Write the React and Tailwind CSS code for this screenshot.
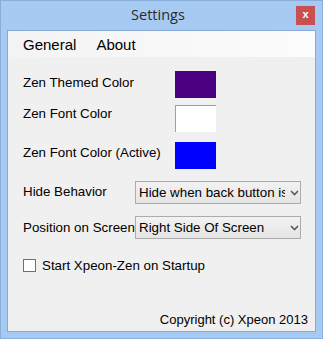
import React from "react";

function Swatch({ color, sunken }) {
  return (
    <div
      className={
        "w-[41px] h-[27px] shrink-0 " +
        (sunken ? "border-t border-l border-[#a0a0a0] " : "")
      }
      style={{ backgroundColor: color }}
    />
  );
}

function Combo({ text }) {
  return (
    <div className="w-[166px] h-[23px] shrink-0 border border-[#acacac] bg-gradient-to-b from-[#f2f2f2] to-[#e5e5e5] flex items-center">
      <div className="w-[146px] ml-[3px] overflow-hidden whitespace-nowrap leading-[15px]">{text}</div>
      <svg width="9" height="6" viewBox="0 0 9 6" className="ml-[5px]">
        <path d="M1 1 L4.5 4.5 L8 1" fill="none" stroke="#5a5a5a" strokeWidth="1.6" />
      </svg>
    </div>
  );
}

export default function App() {
  const body = { fontFamily: '"Liberation Sans", Arial, sans-serif' };
  return (
    <div className="w-[323px] h-[339px] bg-[#a6caf2] border border-[#8aaedc] flex flex-col text-black" style={body}>
      <div className="h-[29px] shrink-0 grid grid-cols-[1fr_auto_1fr] items-center pr-[7px]">
        <div />
        <div className="text-[14.5px] text-[#2a2a2a] leading-none" style={{ fontFamily: '"Open Sans", sans-serif' }}>
          Settings
        </div>
        <div className="justify-self-end w-[19px] h-[19px] bg-[#c75050] flex items-center justify-center">
          <span className="text-white font-bold text-[11px] leading-none -mt-[2px]">x</span>
        </div>
      </div>
      <div className="flex-1 mx-[6px] mb-[6px] border border-[#87a9d6] bg-[#f0f0f0] flex flex-col text-[13.33px]">
        <div className="h-[26px] shrink-0 bg-gradient-to-r from-[#f3f3f3] to-[#fcfcfc] flex items-center pl-[15px] gap-[20px] text-[15px] leading-none">
          <span>General</span>
          <span>About</span>
        </div>
        <div className="flex flex-col pl-[15px] flex-1">
          <div className="mt-[14px] flex items-start h-[27px]">
            <div className="w-[152px] mt-[4px] leading-[15px]">Zen Themed Color</div>
            <Swatch color="#4b0082" />
          </div>
          <div className="mt-[7px] flex items-start h-[27px]">
            <div className="w-[152px] mt-[1px] leading-[15px]">Zen Font Color</div>
            <Swatch color="#ffffff" sunken />
          </div>
          <div className="mt-[10px] flex items-start h-[27px]">
            <div className="w-[152px] mt-[3px] leading-[15px]">Zen Font Color (Active)</div>
            <Swatch color="#0000ff" />
          </div>
          <div className="mt-[12px] flex items-start h-[23px]">
            <div className="w-[112px] mt-[3px] leading-[15px] whitespace-nowrap">Hide Behavior</div>
            <Combo text="Hide when back button is pressed" />
          </div>
          <div className="mt-[12px] flex items-start h-[23px]">
            <div className="w-[112px] mt-[4px] leading-[15px] whitespace-nowrap overflow-visible">Position on Screen</div>
            <Combo text="Right Side Of Screen" />
          </div>
          <div className="mt-[19px] flex items-center h-[15px]">
            <div className="w-[13px] h-[13px] border border-[#707070] bg-white shrink-0" />
            <div className="ml-[6px] leading-[15px]">Start Xpeon-Zen on Startup</div>
          </div>
          <div className="mt-auto mb-[4px] pr-[7px] text-right leading-[15px] text-[13px]">Copyright (c) Xpeon 2013</div>
        </div>
      </div>
    </div>
  );
}
